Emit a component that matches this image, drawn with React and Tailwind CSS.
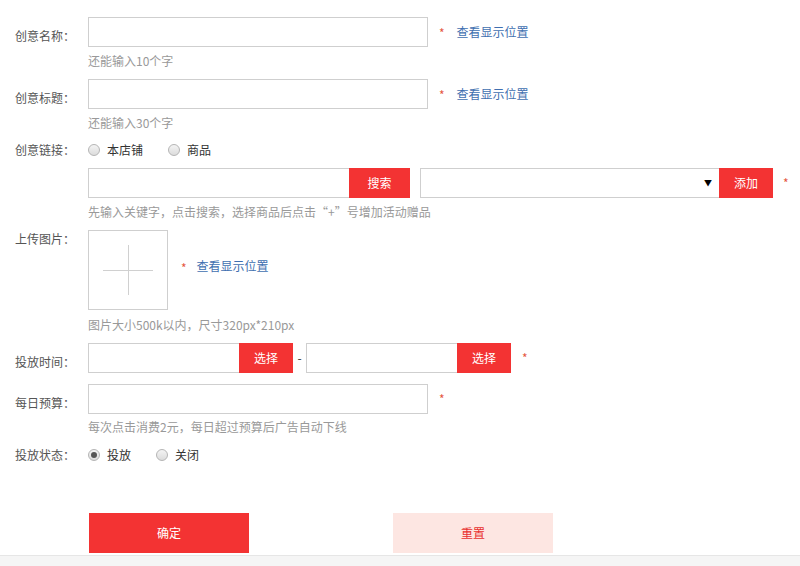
import { useState } from "react";

const font = { fontFamily: '"Noto Sans CJK SC", "Noto Sans", sans-serif' };

function Radio({ checked, label, onClick, gap = "mr-[24px]" }) {
  return (
    <label className={`flex items-center cursor-pointer ${gap}`} onClick={onClick}>
      <span className="w-[12px] h-[12px] rounded-full border border-[#b5b5b5] bg-gradient-to-b from-[#f4f4f4] to-[#dcdcdc] flex items-center justify-center">
        {checked && <span className="w-[6px] h-[6px] rounded-full bg-[#555]" />}
      </span>
      <span className="ml-[7px] text-[#333]">{label}</span>
    </label>
  );
}

function Star({ className = "" }) {
  return <span className={`text-[#e5583f] text-[12px] ${className}`}>*</span>;
}

function Link() {
  return <a className="text-[#3f6fb0] cursor-pointer">查看显示位置</a>;
}

function Row({ label, children, className = "", labelClass = "h-[30px] leading-[38px]" }) {
  return (
    <div className={`flex ${className}`}>
      <div className={`w-[88px] pl-[15px] text-[#555] shrink-0 ${labelClass}`}>{label}</div>
      <div className="flex-1">{children}</div>
    </div>
  );
}

export default function App() {
  const [link, setLink] = useState(null);
  const [status, setStatus] = useState("on");

  return (
    <div className="w-[800px] h-[566px] bg-white text-[12px] overflow-hidden flex flex-col" style={font}>
      <div className="flex-1 pt-[17px]">
        <Row label="创意名称：">
          <div className="flex items-center">
            <input className="w-[340px] h-[30px] border border-[#cfcfcf] outline-none px-2" />
            <Star className="ml-[11px] mr-[12px] mt-[2px]" />
            <Link />
          </div>
          <div className="mt-[6px] leading-[16px] text-[#999]">还能输入10个字</div>
        </Row>

        <Row label="创意标题：" className="mt-[10px]">
          <div className="flex items-center">
            <input className="w-[340px] h-[30px] border border-[#cfcfcf] outline-none px-2" />
            <Star className="ml-[11px] mr-[12px] mt-[2px]" />
            <Link />
          </div>
          <div className="mt-[6px] leading-[16px] text-[#999]">还能输入30个字</div>
        </Row>

        <Row label="创意链接：" className="mt-[11px]" labelClass="leading-[16px]">
          <div className="flex items-center leading-[16px] h-[16px]">
            <Radio checked={link === "shop"} label="本店铺" onClick={() => setLink("shop")} gap="mr-[25px]" />
            <Radio checked={link === "goods"} label="商品" onClick={() => setLink("goods")} />
          </div>
          <div className="flex items-center mt-[10px]">
            <input className="w-[261px] h-[30px] border border-[#cfcfcf] border-r-0 outline-none px-2" />
            <button className="w-[61px] h-[30px] bg-[#f33333] text-white">搜索</button>
            <div className="ml-[10px] w-[299px] h-[30px] border border-[#cfcfcf] border-r-0 flex items-center justify-end pr-[7px]">
              <span className="text-[8px] text-black">▼</span>
            </div>
            <button className="w-[54px] h-[30px] bg-[#f33333] text-white">添加</button>
            <Star className="ml-[10px]" />
          </div>
          <div className="mt-[6px] leading-[16px] text-[#999]">
            先输入关键字，点击搜索，选择商品后点击“+”号增加活动赠品
          </div>
        </Row>

        <Row label="上传图片：" className="mt-[10px]" labelClass="leading-[18px]">
          <div className="flex items-center">
            <div className="w-[80px] h-[80px] border border-[#cfcfcf] relative">
              <span className="absolute left-[14px] right-[14px] top-[39px] h-px bg-[#d0d0d0]" />
              <span className="absolute top-[14px] bottom-[14px] left-[39px] w-px bg-[#d0d0d0]" />
            </div>
            <div className="flex items-center mb-[8px]">
              <Star className="ml-[13px] mr-[10px] mt-[4px]" />
              <Link />
            </div>
          </div>
          <div className="mt-[7px] leading-[16px] text-[#999]">图片大小500k以内，尺寸320px*210px</div>
        </Row>

        <Row label="投放时间：" className="mt-[10px]">
          <div className="flex items-center">
            <input className="w-[151px] h-[30px] border border-[#cfcfcf] border-r-0 outline-none px-2" />
            <button className="w-[54px] h-[30px] bg-[#f33333] text-white">选择</button>
            <span className="w-[13px] text-center text-[#333]">-</span>
            <input className="w-[151px] h-[30px] border border-[#cfcfcf] border-r-0 outline-none px-2" />
            <button className="w-[54px] h-[30px] bg-[#f33333] text-white">选择</button>
            <Star className="ml-[11px]" />
          </div>
        </Row>

        <Row label="每日预算：" className="mt-[11px]">
          <div className="flex items-center">
            <input className="w-[340px] h-[30px] border border-[#cfcfcf] outline-none px-2" />
            <Star className="ml-[11px]" />
          </div>
          <div className="mt-[5px] leading-[16px] text-[#999]">每次点击消费2元，每日超过预算后广告自动下线</div>
        </Row>

        <Row label="投放状态：" className="mt-[12px]" labelClass="leading-[16px]">
          <div className="flex items-center leading-[16px] h-[16px]">
            <Radio checked={status === "on"} label="投放" onClick={() => setStatus("on")} gap="mr-[25px]" />
            <Radio checked={status === "off"} label="关闭" onClick={() => setStatus("off")} />
          </div>
        </Row>

        <div className="flex mt-[50px] pl-[89px]">
          <button className="w-[160px] h-[40px] bg-[#f33333] text-white">确定</button>
          <button className="ml-[144px] w-[160px] h-[40px] bg-[#fde6e2] text-[#e8312f]">重置</button>
        </div>
      </div>
      <div className="h-[11px] border-t border-[#e6e6e6] bg-[#f5f5f5]" />
    </div>
  );
}
